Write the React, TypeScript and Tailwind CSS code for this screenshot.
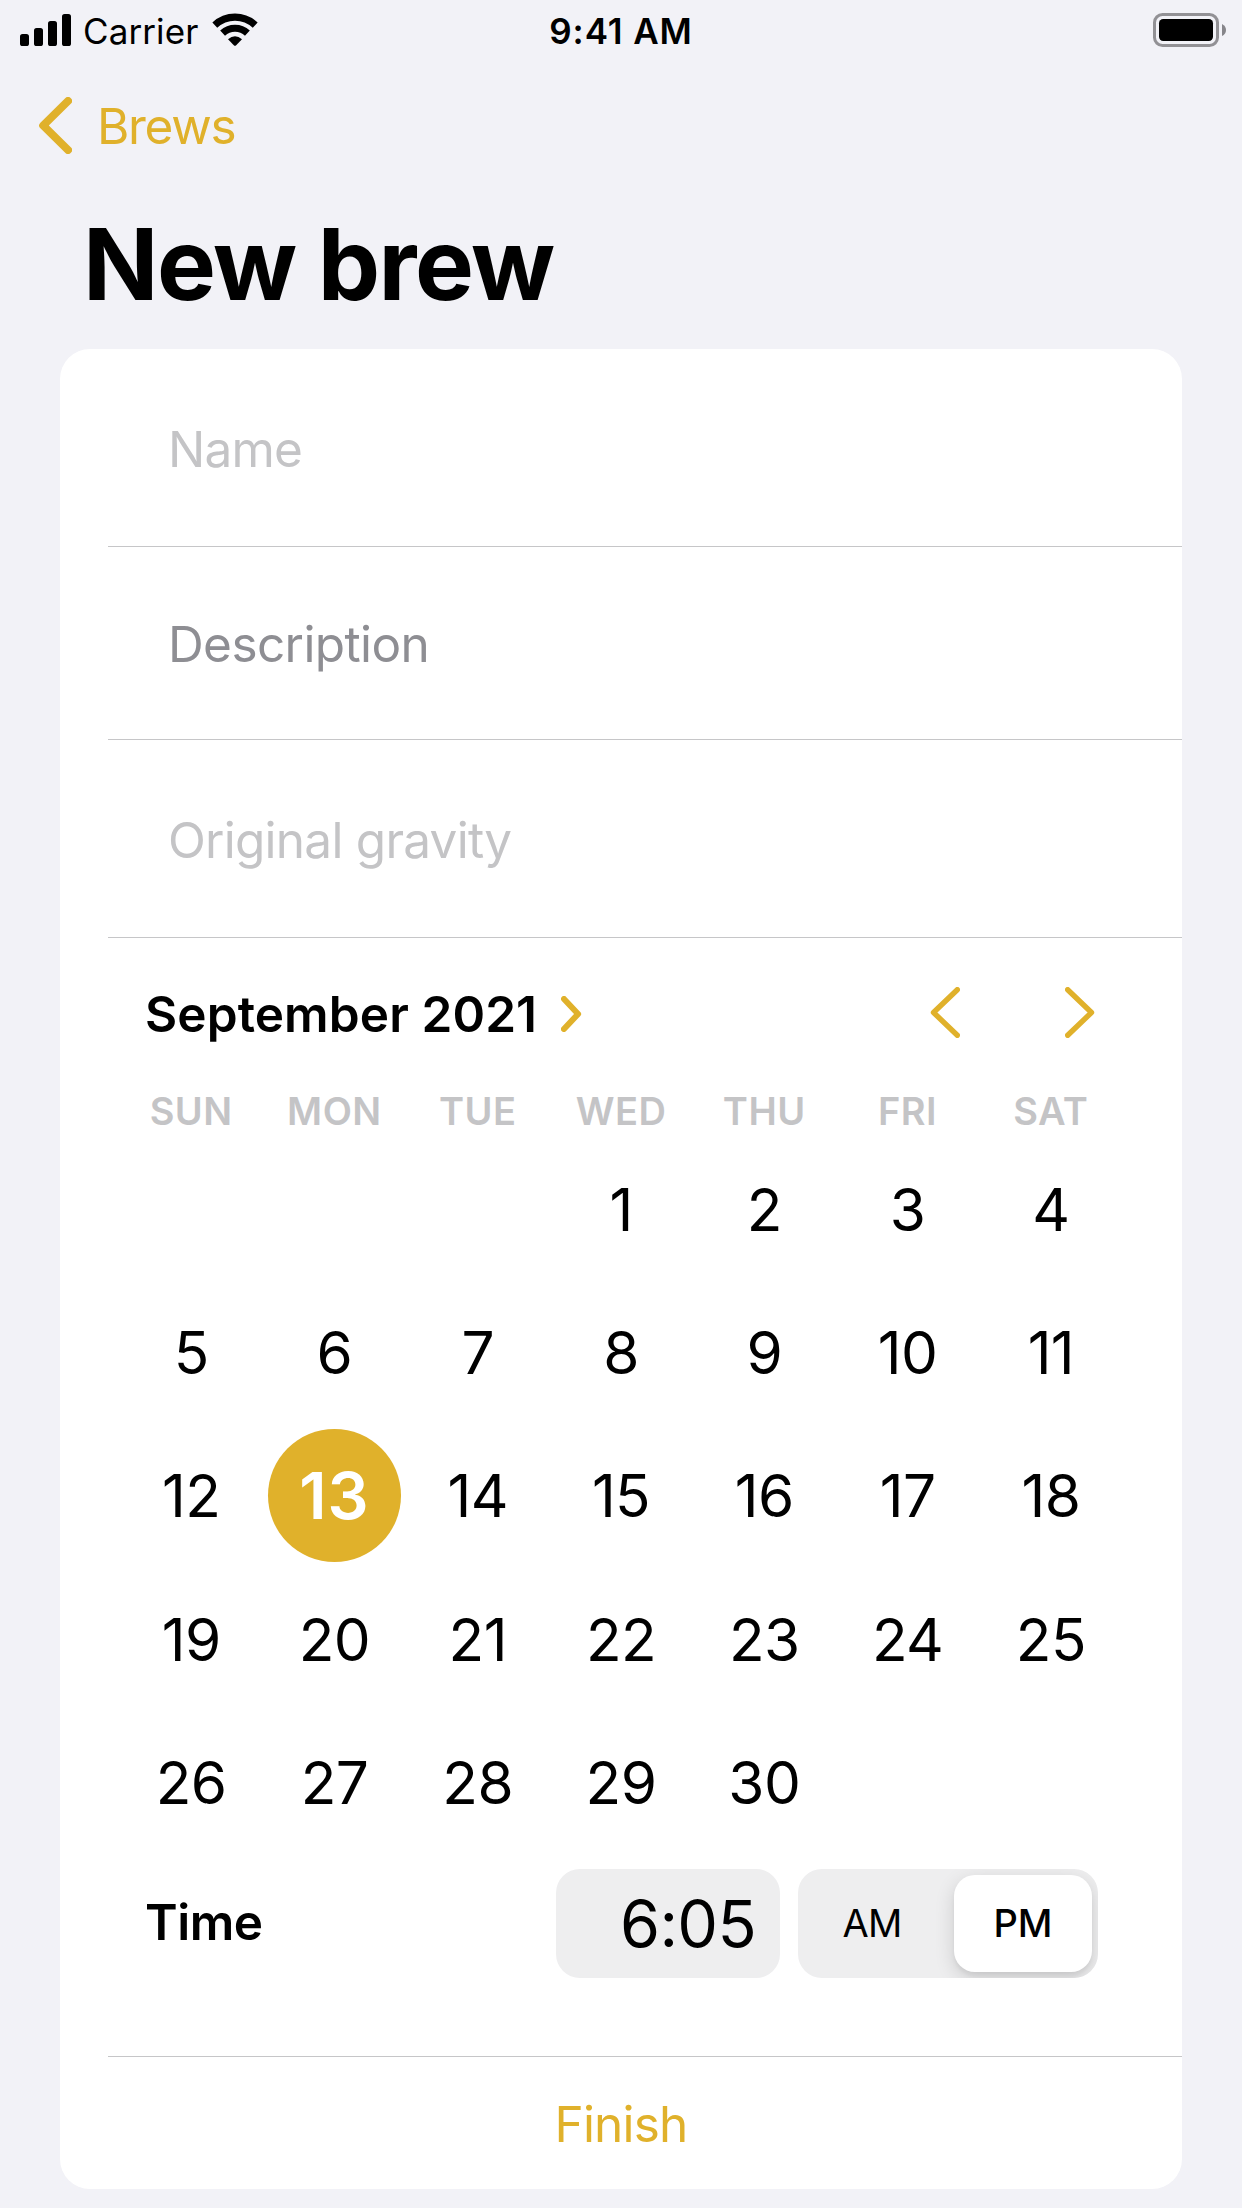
import React from "react";

const weekdays = ["SUN", "MON", "TUE", "WED", "THU", "FRI", "SAT"];
const leadingBlanks = 3;
const selectedDay = 13;
const days = Array.from({ length: 30 }, (_, i) => i + 1);

function SignalIcon() {
  return (
    <svg width="51" height="32" viewBox="0 0 51 32" fill="#000">
      <rect x="0" y="20" width="9" height="12" rx="2.6" />
      <rect x="14" y="14" width="9" height="18" rx="2.6" />
      <rect x="28" y="7" width="9" height="25" rx="2.6" />
      <rect x="42" y="0" width="9" height="32" rx="2.6" />
    </svg>
  );
}

function WifiIcon() {
  return (
    <svg width="46" height="33" viewBox="0 0 46 33" fill="none" stroke="#000">
      <path d="M2.8 12.1 A29.5 29.5 0 0 1 43.2 12.1" strokeWidth="7.1" />
      <path d="M10.6 20.1 A18 18 0 0 1 35.4 20.1" strokeWidth="7" />
      <path d="M16 26.3 Q23 20.2 30 26.3 L24.2 32.2 Q23 33.3 21.8 32.2 Z" fill="#000" stroke="none" />
    </svg>
  );
}

function BatteryIcon() {
  return (
    <svg width="74" height="34" viewBox="0 0 74 34" fill="none">
      <rect x="1.5" y="1.5" width="63" height="31" rx="8" stroke="#929195" strokeWidth="3" />
      <rect x="6" y="6" width="54" height="22" rx="4.2" fill="#000" />
      <path d="M69 11 Q73 13 73 17 Q73 21 69 23 Z" fill="#86858a" />
    </svg>
  );
}

function Chevron({ w, h, stroke, dir }: { w: number; h: number; stroke: number; dir: "left" | "right" }) {
  const p = stroke / 2;
  const far = dir === "left" ? w - p : p;
  const tip = dir === "left" ? p + stroke * 0.15 : w - p - stroke * 0.15;
  return (
    <svg width={w} height={h} viewBox={`0 0 ${w} ${h}`} fill="none">
      <path
        d={`M${far} ${p} L${tip} ${h / 2} L${far} ${h - p}`}
        stroke="#e0b12b"
        strokeWidth={stroke}
        strokeLinecap="round"
        strokeLinejoin="round"
      />
    </svg>
  );
}

export default function App() {
  return (
    <div className="flex h-[2208px] w-[1242px] flex-col overflow-hidden bg-[#f2f2f7] font-['Inter',sans-serif] leading-none text-black">
      <header className="grid h-[60px] grid-cols-3 items-start pt-[13px]">
        <div className="flex items-start pl-5">
          <div className="pt-px">
            <SignalIcon />
          </div>
          <span className="ml-[12px] mr-[14px] w-[115px] whitespace-nowrap text-[35px] leading-[36px] tracking-[0.1px]">Carrier</span>
          <WifiIcon />
        </div>
        <div className="text-center text-[35px] font-semibold leading-[37px] tracking-[0.9px]">9:41 AM</div>
        <div className="flex justify-end pr-[15px]">
          <BatteryIcon />
        </div>
      </header>

      <nav className="flex h-[132px] items-center pl-[38px]">
        <div className="pb-[1px]">
          <Chevron w={34} h={57} stroke={8} dir="left" />
        </div>
        <span className="ml-[25px] pt-[2px] text-[49.5px] tracking-[-1.3px] text-[#e0b12b]">Brews</span>
      </nav>

      <h1 className="h-[157px] pl-[83px] pt-[22px] text-[99px] font-bold leading-[101px] tracking-[-1.5px]">New brew</h1>

      <main className="mx-[60px] h-[1840px] rounded-[30px] bg-white">
        <div className="ml-12 flex h-[198px] items-center border-b border-[#c6c6c8] pl-[60px] pt-[5px] text-[49.5px] tracking-[-0.8px] text-[#c4c4c6]">
          Name
        </div>
        <div className="ml-12 flex h-[193px] items-center border-b border-[#c6c6c8] pl-[60px] pt-[4px] text-[49.5px] tracking-[-0.6px] text-[#8e8e93]">
          Description
        </div>
        <div className="ml-12 flex h-[198px] items-center border-b border-[#c6c6c8] pl-[60px] pt-[5px] text-[49.5px] tracking-[-0.75px] text-[#c4c4c6]">
          Original gravity
        </div>

        <section className="ml-12 h-[1119px] border-b border-[#c6c6c8]">
          <div className="flex h-[146px] items-center pl-[37px] pr-[87px] pt-[5px]">
            <h2 className="w-[387px] whitespace-nowrap pt-[2px] text-[49.5px] font-semibold tracking-[0.1px]">September 2021</h2>
            <div className="ml-[29px] pt-[1px]">
              <Chevron w={21} h={36} stroke={6} dir="right" />
            </div>
            <div className="ml-auto flex gap-[105px] pb-[2px]">
              <Chevron w={30} h={51} stroke={5.4} dir="left" />
              <Chevron w={30} h={51} stroke={5.4} dir="right" />
            </div>
          </div>

          <div className="ml-[11.5px] grid w-[1003px] grid-cols-7">
            {weekdays.map((d) => (
              <div key={d} className="text-center text-[38px] font-semibold leading-[54px] tracking-[0.5px] text-[#c4c4c6]">
                {d}
              </div>
            ))}
          </div>
          <div className="ml-[11.5px] grid w-[1003px] auto-rows-[143.3px] grid-cols-7">
            {Array.from({ length: leadingBlanks }, (_, i) => (
              <div key={`blank-${i}`} />
            ))}
            {days.map((d) => (
              <div key={d} className="flex items-center justify-center text-[58.5px] tracking-[-0.6px]">
                {d === selectedDay ? (
                  <span className="mb-[2px] flex size-[133px] items-center justify-center rounded-full bg-[#e0b12b] pt-[3px] text-[64.6px] font-semibold tracking-[1px] text-white">
                    {d}
                  </span>
                ) : (
                  <span className="pt-[1px]">{d}</span>
                )}
              </div>
            ))}
          </div>

          <div className="mt-[14.5px] flex h-[109px] items-center pl-[37px] pr-[84px]">
            <span className="pb-[2px] text-[49.5px] font-semibold tracking-[-0.5px]">Time</span>
            <div className="ml-auto flex h-full w-[224px] items-center justify-end rounded-[24px] bg-[#eeeeef] pr-[24px] pt-[1px] text-[64.6px] tracking-[-0.7px]">
              6:05
            </div>
            <div className="ml-[18px] flex h-full w-[300px] overflow-hidden rounded-[24px] bg-[#eeeeef] p-[6px] text-[38px]">
              <span className="flex w-[150px] items-center justify-center pb-[1px] pr-[14px] tracking-[-0.8px]">AM</span>
              <span className="flex w-[138px] items-center justify-center rounded-[21px] bg-white pb-[1px] font-medium shadow-[0_6px_20px_rgba(0,0,0,0.14),0_4px_4px_rgba(0,0,0,0.05)]">
                PM
              </span>
            </div>
          </div>
        </section>

        <div className="flex h-[132px] items-center justify-center pt-[3px] text-[49.5px] tracking-[-0.8px] text-[#e0b12b]">Finish</div>
      </main>
    </div>
  );
}
